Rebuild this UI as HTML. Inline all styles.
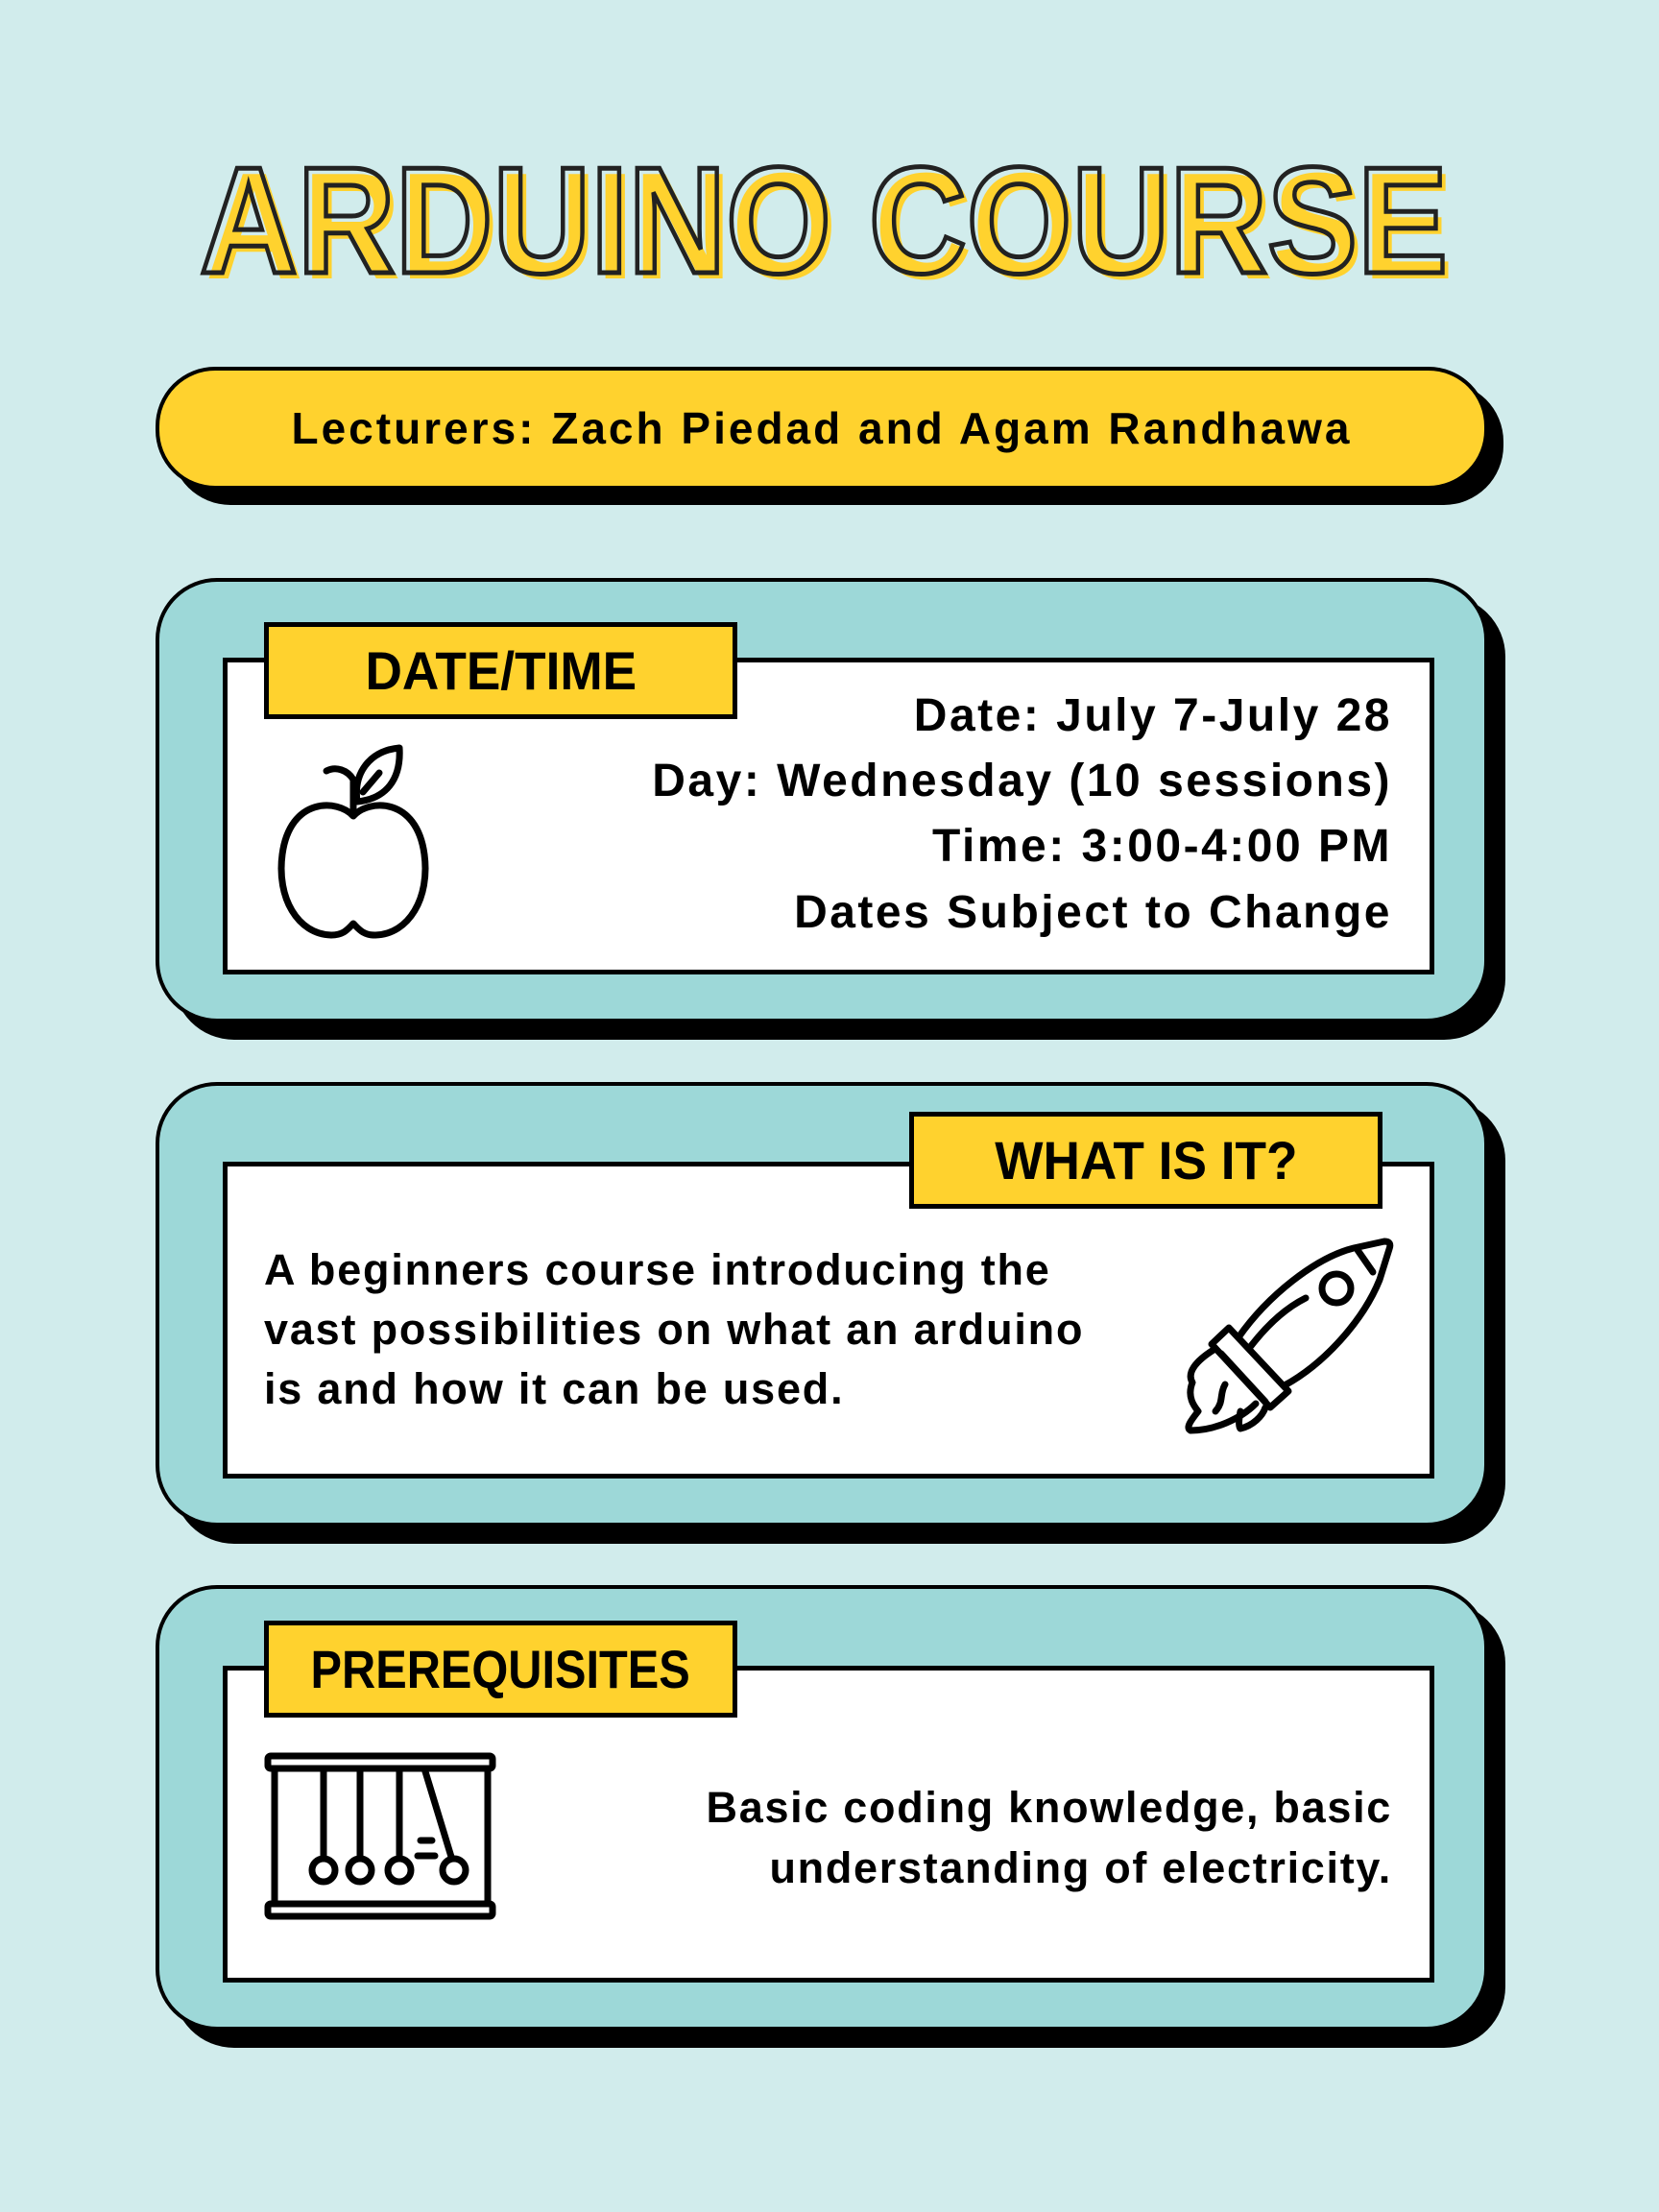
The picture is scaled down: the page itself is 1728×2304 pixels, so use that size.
<!DOCTYPE html>
<html><head><meta charset="utf-8"><style>
body{margin:0;width:1728px;height:2304px;background:#D1ECEC;position:relative;overflow:hidden;font-family:"Liberation Sans",sans-serif;color:#000}
.a{position:absolute}
.shadow{position:absolute;background:#000;border-radius:64px}
.card{position:absolute;background:#9DD8D8;border:4px solid #000;border-radius:64px;box-sizing:border-box}
.inner{position:absolute;background:#fff;border:5px solid #000;box-sizing:border-box}
.label{position:absolute;background:#FFD22E;border:5px solid #000;box-sizing:border-box;display:flex;align-items:center;justify-content:center;font-weight:bold;font-size:56px}
.label span{display:inline-block;transform:scaleX(0.95)}
.t{position:absolute;font-weight:bold;font-size:48px;white-space:nowrap;line-height:1;letter-spacing:2.5px}
</style></head><body>

<svg class="a" style="left:0;top:0" width="1728" height="2304">
 <g font-family="Liberation Sans" font-weight="bold" font-size="158" text-anchor="start">
  <text x="214" y="290" textLength="1300" lengthAdjust="spacingAndGlyphs" fill="#FFD22E">ARDUINO COURSE</text>
  <text x="208" y="284" textLength="1300" lengthAdjust="spacingAndGlyphs" fill="none" stroke="#222" stroke-width="5">ARDUINO COURSE</text>
 </g>
</svg>

<div class="shadow" style="left:178px;top:398px;width:1388px;height:128px;border-radius:62px"></div>
<div class="a" style="left:162px;top:382px;width:1388px;height:128px;border-radius:62px;background:#FFD22E;border:4px solid #000;box-sizing:border-box;display:flex;align-items:center;justify-content:center;font-weight:bold;font-size:46px;letter-spacing:3px">Lecturers: Zach Piedad and Agam Randhawa</div>

<div class="shadow" style="left:180px;top:620px;width:1388px;height:463px"></div>
<div class="card" style="left:162px;top:602px;width:1388px;height:463px"></div>
<div class="inner" style="left:232px;top:685px;width:1262px;height:330px"></div>
<div class="label" style="left:275px;top:648px;width:493px;height:101px"><span>DATE/TIME</span></div>
<div class="t" style="right:278px;top:722px">Date: July 7-July 28</div>
<div class="t" style="right:278px;top:790px">Day: Wednesday (10 sessions)</div>
<div class="t" style="right:278px;top:858px">Time: 3:00-4:00 PM</div>
<div class="t" style="right:278px;top:927px">Dates Subject to Change</div>

<div class="shadow" style="left:180px;top:1145px;width:1388px;height:463px"></div>
<div class="card" style="left:162px;top:1127px;width:1388px;height:463px"></div>
<div class="inner" style="left:232px;top:1210px;width:1262px;height:330px"></div>
<div class="label" style="left:947px;top:1158px;width:493px;height:101px"><span>WHAT IS IT?</span></div>
<div class="t" style="left:275px;top:1300px;font-size:45px;letter-spacing:1.8px">A beginners course introducing the</div>
<div class="t" style="left:275px;top:1362px;font-size:45px;letter-spacing:1.8px">vast possibilities on what an arduino</div>
<div class="t" style="left:275px;top:1424px;font-size:45px;letter-spacing:1.8px">is and how it can be used.</div>

<div class="shadow" style="left:180px;top:1669px;width:1388px;height:464px"></div>
<div class="card" style="left:162px;top:1651px;width:1388px;height:464px"></div>
<div class="inner" style="left:232px;top:1735px;width:1262px;height:330px"></div>
<div class="label" style="left:275px;top:1688px;width:493px;height:101px"><span style="transform:scaleX(0.87)">PREREQUISITES</span></div>
<div class="t" style="right:278px;top:1860px;font-size:45px;letter-spacing:1.7px">Basic coding knowledge, basic</div>
<div class="t" style="right:278px;top:1923px;font-size:45px;letter-spacing:1.7px">understanding of electricity.</div>

<svg class="a" style="left:0;top:0" width="1728" height="2304" fill="none" stroke="#000" stroke-width="7" stroke-linecap="round" stroke-linejoin="round">
 <path d="M368 850 C352 832 302 830 294 890 C288 935 310 973 345 974 C358 974 362 968 368 962 C374 968 378 974 391 974 C426 973 448 935 442 890 C434 830 384 832 368 850 Z"/>
 <path d="M368 848 L368 812 M368 812 C362 802 350 798 340 803"/>
 <path d="M372 835 C368 805 385 782 416 779 C418 812 402 832 372 835 Z"/>
 <path d="M378 825 L395 805"/>
 <path d="M1290 1393 C1320 1350 1370 1310 1410 1300 L1442 1293 Q1450 1293 1447 1301 L1437 1333 C1420 1375 1380 1420 1338 1443"/>
 <path d="M1414 1302 L1430 1325"/>
 <circle cx="1392" cy="1342" r="15"/>
 <path d="M1360 1352 C1340 1362 1320 1380 1303 1402"/>
 <path d="M1262 1400 L1280 1383 L1342 1449 L1323 1466 Z"/>
 <path d="M1272 1410 L1318 1460"/>
 <path d="M1264 1406 C1245 1418 1236 1430 1242 1440 C1236 1455 1244 1465 1248 1470 C1240 1480 1235 1487 1240 1490 C1265 1490 1292 1478 1308 1462"/>
 <path d="M1276 1442 C1270 1452 1275 1460 1266 1470"/>
 <path d="M1292 1470 C1290 1480 1290 1486 1292 1488 C1305 1485 1315 1475 1318 1466"/>
 <rect x="279" y="1829" width="234" height="13" rx="3"/>
 <rect x="279" y="1983" width="234" height="13" rx="3"/>
 <path d="M286 1842 V1983 M508 1842 V1983"/>
 <path d="M337 1842 V1934 M375 1842 V1934 M416 1842 V1934 M442 1842 L470 1934"/>
 <circle cx="337" cy="1948" r="12"/><circle cx="375" cy="1948" r="12"/><circle cx="416" cy="1948" r="12"/><circle cx="473" cy="1948" r="12"/>
 <path d="M438 1917 H450 M435 1933 H453"/>
</svg>
</body></html>
